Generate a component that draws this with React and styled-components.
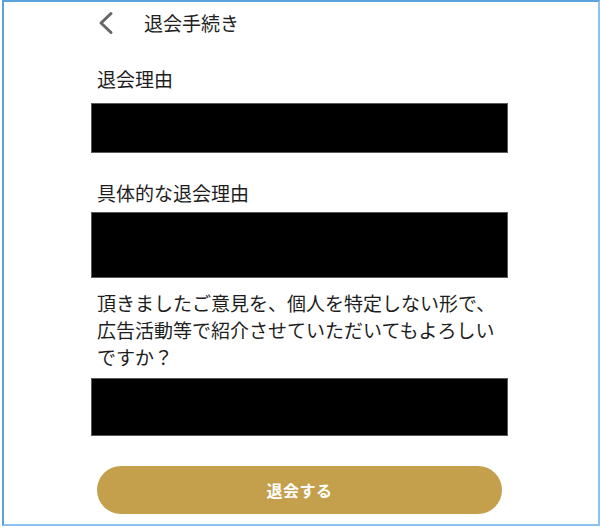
import React from "react";
import styled, { createGlobalStyle } from "styled-components";

const GlobalStyle = createGlobalStyle`
  html, body { margin: 0; padding: 0; background: #ffffff; }
  body {
    font-family: "Noto Sans CJK JP", "Noto Sans", sans-serif;
    color: #222222;
  }
`;

const Frame = styled.div`
  box-sizing: border-box;
  margin: 0 1px 0 2px;
  width: 598px;
  height: 526px;
  border: 2px solid;
  border-color: #5aa3dc #8cc2f2 #8cc2f2 #5aa3dc;
  background: #ffffff;
  overflow: hidden;
`;

const Column = styled.div`
  display: flex;
  flex-direction: column;
  width: 417px;
  margin-left: 87px;
`;

const Header = styled.header`
  display: flex;
  align-items: center;
  height: 42px;
  padding-left: 6px;
  gap: 30px;
`;

const BackButton = styled.button`
  display: flex;
  align-items: center;
  justify-content: center;
  width: 17px;
  height: 24px;
  padding: 0;
  border: none;
  background: none;
  cursor: pointer;
`;

const Title = styled.h1`
  margin: 0;
  font-size: 19px;
  line-height: 24px;
  font-weight: 400;
  color: #222222;
`;

const Label = styled.label`
  display: block;
  margin-top: ${(p) => p.$top}px;
  padding-left: 6px;
  font-size: 19px;
  line-height: 24px;
  font-weight: 400;
  color: #1e1e1e;
`;

const Question = styled.p`
  margin: ${(p) => p.$top}px 0 0;
  padding-left: 6px;
  font-size: 19px;
  line-height: 27px;
  font-weight: 400;
  color: #1e1e1e;
`;

const Field = styled.div`
  box-sizing: border-box;
  margin-top: ${(p) => p.$top}px;
  height: ${(p) => p.$h}px;
  background: #000000;
  border: 1px solid #5a5a5a;
`;

const SubmitButton = styled.button`
  margin: 30px 0 0 6px;
  width: 405px;
  height: 48px;
  border: none;
  border-radius: 24px;
  background: #c4a04d;
  color: #ffffff;
  font-family: "Noto Sans CJK JP", "Noto Sans", sans-serif;
  font-size: 16px;
  font-weight: 700;
  letter-spacing: 0.5px;
  cursor: pointer;
`;

const ChevronLeft = () => (
  <svg width="17" height="24" viewBox="0 0 17 24" fill="none">
    <polyline
      points="14,2.5 4,12 14,21.5"
      stroke="#666666"
      strokeWidth="3"
      strokeLinecap="round"
      strokeLinejoin="round"
    />
  </svg>
);

export default function App() {
  return (
    <>
      <GlobalStyle />
      <Frame>
        <Column>
          <Header>
            <BackButton aria-label="戻る">
              <ChevronLeft />
            </BackButton>
            <Title>退会手続き</Title>
          </Header>
          <Label $top={23}>退会理由</Label>
          <Field $top={12} $h={50} />
          <Label $top={28}>具体的な退会理由</Label>
          <Field $top={7} $h={66} />
          <Question $top={11}>
            頂きましたご意見を、個人を特定しない形で、広告活動等で紹介させていただいてもよろしいですか？
          </Question>
          <Field $top={8} $h={58} />
          <SubmitButton>退会する</SubmitButton>
        </Column>
      </Frame>
    </>
  );
}
